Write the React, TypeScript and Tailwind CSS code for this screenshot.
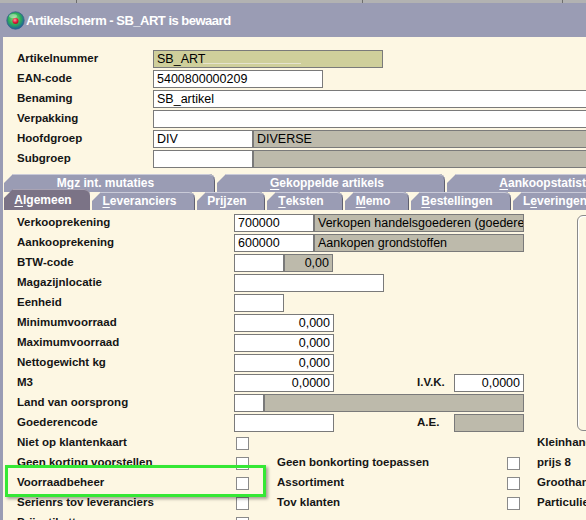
import React from "react";

const FONT = "font-['Liberation_Sans',Arial,sans-serif]";

function Label({ children, cls }: { children?: React.ReactNode; cls: string }) {
  return (
    <div className={`shrink-0 text-[11.5px] font-bold text-[#151515] whitespace-nowrap leading-none ${cls}`}>
      {children}
    </div>
  );
}

function Field({ cls, children, right }: { cls: string; children?: React.ReactNode; right?: boolean }) {
  return (
    <div
      className={`h-[18px] shrink-0 border border-[#7a7a7a] flex items-center px-[3px] text-[12.5px] leading-none text-black whitespace-nowrap overflow-hidden ${
        right ? "justify-end" : "justify-start"
      } ${cls}`}
    >
      {children}
    </div>
  );
}

function Row({ label, lw, children }: { label: string; lw: string; children?: React.ReactNode }) {
  return (
    <div className="flex items-center h-[18px]">
      <Label cls={lw}>{label}</Label>
      {children}
    </div>
  );
}

function Tab({
  w,
  pre,
  u,
  post,
  active,
}: {
  w: string;
  pre?: string;
  u: string;
  post: string;
  active?: boolean;
}) {
  return (
    <div
      className={`${w} shrink-0 flex items-center justify-center pr-[8px] rounded-tr-[6px] [clip-path:polygon(9px_0,100%_0,100%_100%,0_100%,0_9px)] text-[12px] font-bold text-white whitespace-nowrap leading-none ${
        active
          ? "h-[21px] bg-[#7b7386] relative z-10 shadow-[inset_0_1px_0_#a9a3b3]"
          : "h-[18px] bg-[#9a9cb4] shadow-[inset_0_1px_0_#c9cad8,inset_-1px_0_0_#5f6070]"
      }`}
    >
      {pre}
      <span className="underline underline-offset-2 decoration-1">{u}</span>
      {post}
    </div>
  );
}

function Check() {
  return <div className="w-[13px] h-[13px] shrink-0 border border-[#8a8a8a] bg-white" />;
}

function CheckRow({
  a,
  b,
  c,
}: {
  a: string;
  b?: string;
  c?: string;
}) {
  return (
    <div className="flex items-center h-[20px]">
      <Label cls="w-[219px]">{a}</Label>
      <Check />
      <div className="w-[258px] shrink-0 pl-[28px]">
        {b ? <Label cls="">{b}</Label> : null}
      </div>
      {b ? <Check /> : <div className="w-[13px] shrink-0" />}
      <Label cls="pl-[17px]">{c}</Label>
    </div>
  );
}

function Globe() {
  return (
    <svg width="19" height="19" viewBox="0 0 19 19">
      <defs>
        <radialGradient id="g1" cx="45%" cy="40%" r="60%">
          <stop offset="0%" stopColor="#8fe07a" />
          <stop offset="55%" stopColor="#2fb05a" />
          <stop offset="100%" stopColor="#1d5f9a" />
        </radialGradient>
        <radialGradient id="g2" cx="40%" cy="35%" r="70%">
          <stop offset="0%" stopColor="#ff9aa8" />
          <stop offset="60%" stopColor="#e21838" />
          <stop offset="100%" stopColor="#a0102a" />
        </radialGradient>
      </defs>
      <circle cx="9.5" cy="9.5" r="8.7" fill="url(#g1)" stroke="#3a5f8a" strokeWidth="0.8" />
      <ellipse cx="7" cy="5" rx="4" ry="2" fill="#ffffff" opacity="0.35" />
      <circle cx="9.5" cy="10" r="3" fill="url(#g2)" />
    </svg>
  );
}

export default function App() {
  return (
    <div className={`relative w-[586px] h-[520px] overflow-hidden bg-[#fdf7e3] ${FONT}`}>
      {/* top strip */}
      <div className="flex h-[3px] bg-[#b2b2b2]">
        <div className="w-[77px] border-r border-[#6e6e6e]" />
        <div className="w-[286px] border-r border-[#6e6e6e]" />
        <div className="w-[200px] border-r border-[#6e6e6e]" />
      </div>

      {/* title bar */}
      <div className="h-[34px] bg-[#9a9cb4] flex items-center pl-[6px] gap-[1px]">
        <Globe />
        <div className="text-white font-bold text-[13px] tracking-[-0.5px] leading-none whitespace-nowrap">
          Artikelscherm - SB_ART is bewaard
        </div>
      </div>

      {/* body */}
      <div className="border-l-[3px] border-[#9a9cb4] h-[483px]">
        {/* header fields */}
        <div className="flex flex-col gap-[2px] pt-[13px] pl-[14px]">
          <Row label="Artikelnummer" lw="w-[136px]">
            <Field cls="w-[230px] bg-[#cfcf9b] relative">
              SB_ART
              <span className="absolute left-[49px] top-[12px] w-[98px] h-[1px] bg-[#e6e4cf]" />
            </Field>
          </Row>
          <Row label="EAN-code" lw="w-[136px]">
            <Field cls="w-[170px] bg-white">5400800000209</Field>
          </Row>
          <Row label="Benaming" lw="w-[136px]">
            <Field cls="w-[460px] bg-white">SB_artikel</Field>
          </Row>
          <Row label="Verpakking" lw="w-[136px]">
            <Field cls="w-[460px] bg-white" />
          </Row>
          <Row label="Hoofdgroep" lw="w-[136px]">
            <Field cls="w-[100px] bg-white">DIV</Field>
            <Field cls="w-[360px] bg-[#bdbaab]">DIVERSE</Field>
          </Row>
          <Row label="Subgroep" lw="w-[136px]">
            <Field cls="w-[100px] bg-white" />
            <Field cls="w-[360px] bg-[#bdbaab]" />
          </Row>
        </div>

        {/* tabs row 1 */}
        <div className="flex gap-[2px] pl-[1px] h-[18px] mt-[6px]">
          <Tab w="w-[211px]" u="M" post="gz int. mutaties" />
          <Tab w="w-[228px]" u="G" post="ekoppelde artikels" />
          <Tab w="w-[230px]" u="A" post="ankoopstatistieken" />
        </div>
        {/* tabs row 2 */}
        <div className="flex items-end gap-[2px] pl-[1px] h-[18px]">
          <Tab w="w-[86px]" u="A" post="lgemeen" active />
          <Tab w="w-[103px]" u="L" post="everanciers" />
          <Tab w="w-[68px]" pre="Pr" u="i" post="jzen" />
          <Tab w="w-[76px]" u="T" post="eksten" />
          <Tab w="w-[64px]" u="M" post="emo" />
          <Tab w="w-[100px]" u="B" post="estellingen" />
          <Tab w="w-[92px]" pre="L" u="e" post="veringen" />
        </div>

        {/* tab content */}
        <div className="pt-[4px] pl-[14px]">
          <div className="flex">
            <div className="flex flex-col gap-[2px] w-[507px] shrink-0">
              <Row label="Verkooprekening" lw="w-[217px]">
                <Field cls="w-[80px] bg-white">700000</Field>
                <Field cls="w-[210px] bg-[#bdbaab]">Verkopen handelsgoederen (goederen)</Field>
              </Row>
              <Row label="Aankooprekening" lw="w-[217px]">
                <Field cls="w-[80px] bg-white">600000</Field>
                <Field cls="w-[210px] bg-[#bdbaab]">Aankopen grondstoffen</Field>
              </Row>
              <Row label="BTW-code" lw="w-[217px]">
                <Field cls="w-[50px] bg-white" />
                <Field cls="w-[49px] bg-[#bdbaab]" right>
                  0,00
                </Field>
              </Row>
              <Row label="Magazijnlocatie" lw="w-[217px]">
                <Field cls="w-[150px] bg-white" />
              </Row>
              <Row label="Eenheid" lw="w-[217px]">
                <Field cls="w-[50px] bg-white" />
              </Row>
              <Row label="Minimumvoorraad" lw="w-[217px]">
                <Field cls="w-[100px] bg-white" right>
                  0,000
                </Field>
              </Row>
              <Row label="Maximumvoorraad" lw="w-[217px]">
                <Field cls="w-[100px] bg-white" right>
                  0,000
                </Field>
              </Row>
              <Row label="Nettogewicht kg" lw="w-[217px]">
                <Field cls="w-[100px] bg-white" right>
                  0,000
                </Field>
              </Row>
              <Row label="M3" lw="w-[217px]">
                <Field cls="w-[100px] bg-white" right>
                  0,0000
                </Field>
                <Label cls="w-[120px] pl-[83px]">I.V.K.</Label>
                <Field cls="w-[70px] bg-white" right>
                  0,0000
                </Field>
              </Row>
              <Row label="Land van oorsprong" lw="w-[217px]">
                <Field cls="w-[30px] bg-white" />
                <Field cls="w-[260px] bg-[#bdbaab]" />
              </Row>
              <Row label="Goederencode" lw="w-[217px]">
                <Field cls="w-[100px] bg-white" />
                <Label cls="w-[120px] pl-[83px]">A.E.</Label>
                <Field cls="w-[70px] bg-[#bdbaab]" />
              </Row>
            </div>
            <div className="ml-[53px] mt-[1px] w-[40px] h-[216px] shrink-0 rounded-l-[6px] border border-[#8a8a8a] shadow-[inset_1px_1px_0_#ffffff]" />
          </div>

          <div className="flex flex-col mt-[1px]">
            <CheckRow a="Niet op klantenkaart" c="Kleinhandel" />
            <CheckRow a="Geen korting voorstellen" b="Geen bonkorting toepassen" c="prijs 8" />
            <CheckRow a="Voorraadbeheer" b="Assortiment" c="Groothandel" />
            <CheckRow a="Serienrs tov leveranciers" b="Tov klanten" c="Particulier" />
            <CheckRow a="Prijsetiketten" />
          </div>
        </div>
      </div>

      {/* green highlight */}
      <div className="absolute left-[5px] top-[465px] w-[261px] h-[32px] border-[3px] border-[#35e835] shadow-[2px_2px_3px_rgba(0,0,0,0.35)]" />
    </div>
  );
}
